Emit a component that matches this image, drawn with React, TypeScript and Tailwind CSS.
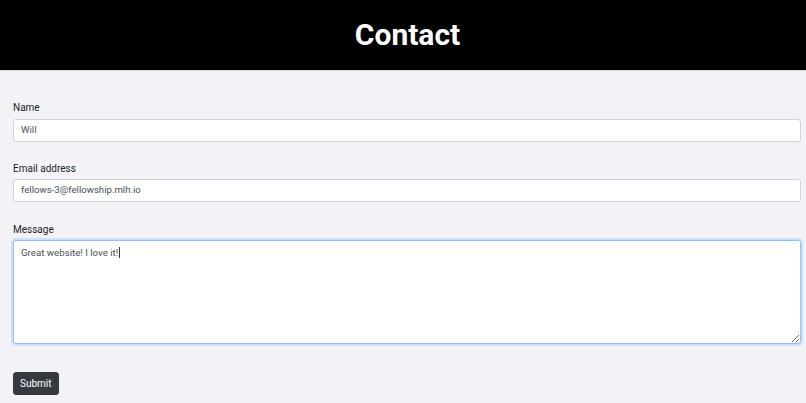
import React from "react";

export default function App() {
  return (
    <div className="min-h-[403px] w-full bg-[#f2f2f7] font-['Roboto','Liberation_Sans',sans-serif] text-[#212529]">
      <header className="flex h-[71px] items-center justify-center border-b border-[#d6d6da] bg-black pl-[9px]">
        <h1 className="text-[30px] font-bold leading-[38px] text-white">Contact</h1>
      </header>
      <form className="ml-[13px] mr-[5px] pt-[29px]" onSubmit={(e) => e.preventDefault()}>
        <div>
          <label className="mb-[4px] block text-[10px] leading-[15px]">Name</label>
          <div className="flex h-[23px] items-center rounded-[3px] border border-[#ced4da] bg-white px-[7px] text-[9.6px] text-[#495057]">
            Will
          </div>
        </div>
        <div className="mt-[19px]">
          <label className="mb-[3px] block text-[10px] leading-[15px]">Email address</label>
          <div className="flex h-[23px] items-center rounded-[3px] border border-[#ced4da] bg-white px-[7px] text-[9.6px] text-[#495057]">
            fellows-3@fellowship.mlh.io
          </div>
        </div>
        <div className="mt-[20px]">
          <label className="mb-[3px] block text-[10px] leading-[15px]">Message</label>
          <div className="h-[104px] resize overflow-auto rounded-[3px] border border-[#8fc0f2] bg-white px-[7px] py-[4px] text-[9.7px] leading-[15px] text-[#495057] shadow-[0_0_0_2px_rgba(0,123,255,0.15)]">
            Great website! I love it!
            <span className="ml-[1px] inline-block h-[11px] w-[1px] translate-y-[2px] bg-[#333]" />
          </div>
        </div>
        <button
          type="submit"
          className="mt-[28px] flex h-[23px] items-center rounded-[3px] border border-[#343a40] bg-[#343a40] px-[6px] text-[10px] text-white"
        >
          Submit
        </button>
      </form>
    </div>
  );
}
